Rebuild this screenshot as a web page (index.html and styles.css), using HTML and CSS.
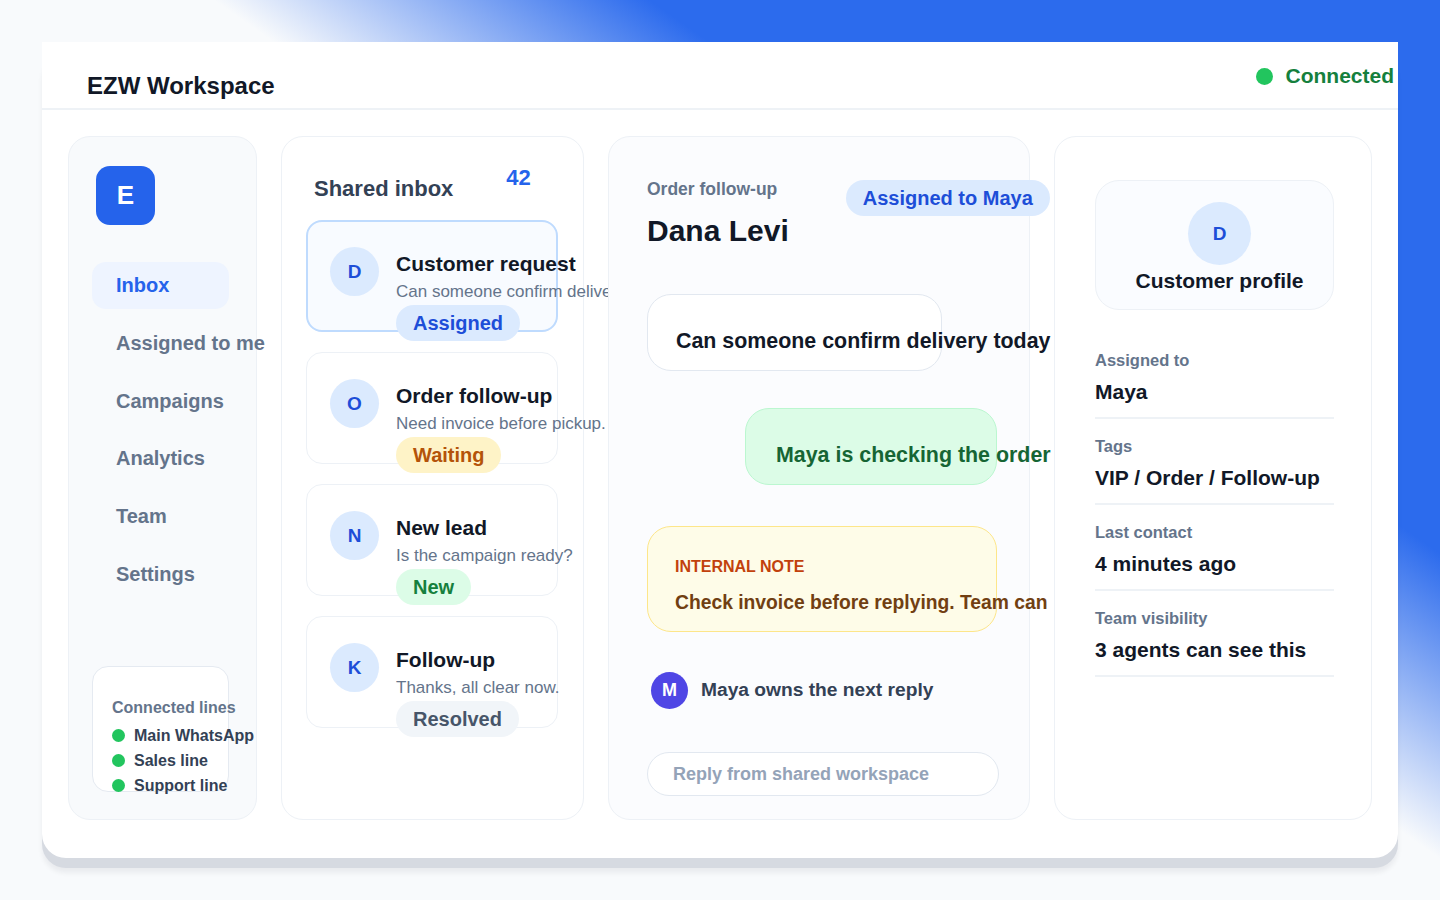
FILE: index.html
```html
<!DOCTYPE html>
<html lang="en">
<head>
  <meta charset="UTF-8" />
  <meta name="viewport" content="width=device-width, initial-scale=1.0"/>
  <title>EZW Workspace</title>
  <link rel="stylesheet" href="styles.css">
</head>
<body>
  <div class="app">
    <header class="topbar">
      <h1 class="brand">EZW Workspace</h1>
      <div class="status"><span class="dot"></span>Connected</div>
    </header>

    <main class="board">
      <aside class="panel sidebar">
        <div class="logo">E</div>
        <nav class="nav">
          <div class="nav-item active">Inbox</div>
          <div class="nav-item">Assigned to me</div>
          <div class="nav-item">Campaigns</div>
          <div class="nav-item">Analytics</div>
          <div class="nav-item">Team</div>
          <div class="nav-item">Settings</div>
        </nav>
        <div class="lines">
          <div class="lines-title">Connected lines</div>
          <div class="line"><span class="dot dot-sm"></span>Main WhatsApp</div>
          <div class="line"><span class="dot dot-sm"></span>Sales line</div>
          <div class="line"><span class="dot dot-sm"></span>Support line</div>
        </div>
      </aside>

      <section class="panel inbox">
        <div class="inbox-head">
          <h2>Shared inbox</h2>
          <span class="count">42</span>
        </div>
        <div class="conv-list">
          <div class="conv active">
            <div class="avatar">D</div>
            <div class="conv-body">
              <div class="conv-title">Customer request</div>
              <div class="conv-text">Can someone confirm delivery today?</div>
              <span class="tag tag-blue">Assigned</span>
            </div>
          </div>
          <div class="conv">
            <div class="avatar">O</div>
            <div class="conv-body">
              <div class="conv-title">Order follow-up</div>
              <div class="conv-text">Need invoice before pickup.</div>
              <span class="tag tag-yellow">Waiting</span>
            </div>
          </div>
          <div class="conv">
            <div class="avatar">N</div>
            <div class="conv-body">
              <div class="conv-title">New lead</div>
              <div class="conv-text">Is the campaign ready?</div>
              <span class="tag tag-green">New</span>
            </div>
          </div>
          <div class="conv">
            <div class="avatar">K</div>
            <div class="conv-body">
              <div class="conv-title">Follow-up</div>
              <div class="conv-text">Thanks, all clear now.</div>
              <span class="tag tag-gray">Resolved</span>
            </div>
          </div>
        </div>
      </section>

      <section class="panel chat">
        <div class="chat-head">
          <div>
            <div class="chat-label">Order follow-up</div>
            <h2 class="chat-name">Dana Levi</h2>
          </div>
          <span class="tag tag-blue head-tag">Assigned to Maya</span>
        </div>

        <div class="bubble bubble-in">Can someone confirm delivery today</div>
        <div class="bubble bubble-out">Maya is checking the order</div>

        <div class="note">
          <div class="note-label">INTERNAL NOTE</div>
          <div class="note-text">Check invoice before replying. Team can</div>
        </div>

        <div class="owner">
          <div class="owner-avatar">M</div>
          <span>Maya owns the next reply</span>
        </div>

        <div class="reply">Reply from shared workspace</div>
      </section>

      <section class="panel profile">
        <div class="profile-card">
          <div class="profile-avatar">D</div>
          <div class="profile-name">Customer profile</div>
        </div>
        <div class="fields">
          <div class="field">
            <div class="field-label">Assigned to</div>
            <div class="field-value">Maya</div>
          </div>
          <div class="field">
            <div class="field-label">Tags</div>
            <div class="field-value">VIP / Order / Follow-up</div>
          </div>
          <div class="field">
            <div class="field-label">Last contact</div>
            <div class="field-value">4 minutes ago</div>
          </div>
          <div class="field">
            <div class="field-label">Team visibility</div>
            <div class="field-value">3 agents can see this</div>
          </div>
        </div>
      </section>
    </main>
  </div>
</body>
</html>
```

FILE: styles.css
```css
:root {
  --blue: #2563eb;
  --blue-soft: #dbeafe;
  --blue-text: #1d4ed8;
  --ink: #111827;
  --slate: #334155;
  --muted: #64748b;
  --line: #edf1f6;
  --green: #22c55e;
}

html, body {
  margin: 0;
  height: 100%;
}

body {
  box-sizing: border-box;
  padding: 42px;
  font-family: "Liberation Sans", Arial, sans-serif;
  font-weight: 700;
  color: var(--ink);
  background: linear-gradient(35deg, #f8fafc 55%, #2c6bed 71%);
}

.app {
  height: 816px;
  background: #fff;
  border-radius: 24px;
  box-shadow: 0 10px 0 #d6dae1, 0 15px 5px rgba(15, 23, 42, 0.06);
  display: flex;
  flex-direction: column;
}

/* top bar */
.topbar {
  height: 66px;
  flex: none;
  background: #fff;
  border-bottom: 2px solid #eef2f6;
  display: flex;
  justify-content: space-between;
  padding: 0 4px 0 45px;
}

.brand {
  margin: 0;
  align-self: flex-end;
  padding-bottom: 8px;
  font-size: 24px;
  line-height: 28px;
  color: var(--ink);
}

.status {
  margin-top: 21px;
  height: 26px;
  display: flex;
  align-items: center;
  gap: 12px;
  font-size: 21px;
  line-height: 26px;
  color: #15803d;
}

.dot {
  width: 17px;
  height: 17px;
  border-radius: 50%;
  background: var(--green);
  flex: none;
}

.dot-sm {
  width: 13px;
  height: 13px;
}

/* board */
.board {
  flex: 1;
  display: grid;
  grid-template-columns: 189px 303px 422px 318px;
  gap: 24px;
  padding: 26px 26px 38px;
}

.panel {
  position: relative;
  box-sizing: border-box;
  border: 1px solid var(--line);
  border-radius: 22px;
}

/* sidebar */
.sidebar {
  background: #f8fafc;
  padding: 29px 23px 27px;
  display: flex;
  flex-direction: column;
}

.logo {
  width: 59px;
  height: 59px;
  margin-left: 4px;
  border-radius: 14px;
  background: var(--blue);
  color: #fff;
  font-size: 26px;
  display: flex;
  align-items: center;
  justify-content: center;
}

.nav {
  margin-top: 37px;
  display: flex;
  flex-direction: column;
  gap: 10.8px;
}

.nav-item {
  width: 137px;
  height: 47px;
  box-sizing: border-box;
  padding-left: 24px;
  display: flex;
  align-items: center;
  border-radius: 14px;
  font-size: 20px;
  color: var(--muted);
  white-space: nowrap;
}

.nav-item.active {
  background: #eef4ff;
  color: var(--blue);
}

.lines {
  margin-top: auto;
  width: 137px;
  height: 126px;
  box-sizing: border-box;
  padding: 31px 0 0 19px;
  background: #fff;
  border: 1px solid #e5eaf1;
  border-radius: 16px;
  white-space: nowrap;
}

.lines-title {
  font-size: 16px;
  line-height: 20px;
  color: var(--muted);
  margin-bottom: 5px;
}

.line {
  display: flex;
  align-items: center;
  gap: 9px;
  height: 25px;
  font-size: 16px;
  color: var(--slate);
}

/* inbox */
.inbox {
  background: #fff;
  padding: 28px 25px 0 24px;
}

.inbox-head {
  display: flex;
  align-items: flex-start;
  gap: 53px;
  padding-left: 8px;
  margin-bottom: 18px;
}

.inbox-head h2 {
  margin: 11px 0 0;
  font-size: 22px;
  line-height: 26px;
  color: var(--slate);
}

.count {
  font-size: 22px;
  line-height: 26px;
  color: var(--blue);
}

.conv-list {
  display: flex;
  flex-direction: column;
  gap: 20px;
}

.conv {
  height: 112px;
  box-sizing: border-box;
  border: 1px solid var(--line);
  border-radius: 16px;
  padding: 26px 0 0 23px;
  background: #fff;
  display: flex;
  align-items: flex-start;
  gap: 17px;
}

.conv.active {
  border: 2px solid #bfdbfe;
  padding: 25px 0 0 22px;
  background: #f8fbff;
}

.avatar {
  width: 49px;
  height: 49px;
  flex: none;
  border-radius: 50%;
  background: var(--blue-soft);
  color: var(--blue-text);
  font-size: 19px;
  display: flex;
  align-items: center;
  justify-content: center;
}

.conv-body {
  padding-top: 2px;
  white-space: nowrap;
}

.conv-title {
  font-size: 21px;
  line-height: 30px;
  color: var(--ink);
}

.conv-text {
  font-size: 17px;
  font-weight: 400;
  line-height: 26px;
  color: var(--muted);
}

.tag {
  display: inline-flex;
  align-items: center;
  height: 36px;
  padding: 0 17px;
  border-radius: 18px;
  font-size: 20px;
  line-height: 24px;
  white-space: nowrap;
}

.tag-blue { background: var(--blue-soft); color: var(--blue-text); }
.tag-yellow { background: #fef3c7; color: #b45309; }
.tag-green { background: #dcfce7; color: #15803d; }
.tag-gray { background: #f1f5f9; color: #475569; }

/* chat */
.chat {
  background: #fbfcfe;
  padding: 41px 38px 0;
  display: flex;
  flex-direction: column;
  align-items: flex-start;
}

.chat-head {
  display: flex;
  align-items: flex-start;
  gap: 57px;
}

.head-tag {
  flex: none;
  margin-top: 2px;
}

.chat-label {
  font-size: 17.5px;
  line-height: 22px;
  color: var(--muted);
  white-space: nowrap;
}

.chat-name {
  margin: 12px 0 0;
  font-size: 30px;
  line-height: 38px;
  color: var(--ink);
  white-space: nowrap;
}

.bubble {
  height: 77px;
  box-sizing: border-box;
  border-radius: 24px;
  padding: 33px 0 0 28px;
  font-size: 21.4px;
  line-height: 26px;
  white-space: nowrap;
}

.bubble-in {
  width: 295px;
  margin-top: 44px;
  background: #fff;
  border: 1px solid #e2e8f0;
  color: var(--ink);
}

.bubble-out {
  width: 252px;
  margin: 37px 0 0 98px;
  padding-left: 30px;
  background: #dcfce7;
  border: 1px solid #bbf7d0;
  color: #166534;
}

.note {
  width: 350px;
  height: 106px;
  box-sizing: border-box;
  margin-top: 41px;
  padding: 30px 0 0 27px;
  background: #fefce8;
  border: 1px solid #fde68a;
  border-radius: 24px;
  white-space: nowrap;
}

.note-label {
  font-size: 16px;
  line-height: 20px;
  color: #c2410c;
}

.note-text {
  margin-top: 13px;
  font-size: 19.3px;
  line-height: 26px;
  color: #713f12;
}

.owner {
  margin-top: 39px;
  height: 38px;
  padding-left: 4px;
  display: flex;
  align-items: center;
  gap: 13px;
  font-size: 19.2px;
  color: var(--slate);
  white-space: nowrap;
}

.owner-avatar {
  width: 37px;
  height: 37px;
  border-radius: 50%;
  background: #4f46e5;
  color: #fff;
  font-size: 18px;
  display: flex;
  align-items: center;
  justify-content: center;
}

.reply {
  margin-top: 43px;
  width: 352px;
  height: 44px;
  box-sizing: border-box;
  padding-left: 25px;
  display: flex;
  align-items: center;
  background: #fff;
  border: 1px solid #e2e8f0;
  border-radius: 22px;
  font-size: 18px;
  color: #94a3b8;
}

/* profile */
.profile {
  background: #fff;
  padding: 43px 37px 0 40px;
}

.profile-card {
  height: 130px;
  box-sizing: border-box;
  padding: 21px 0 0 10px;
  background: #fafcff;
  border: 1px solid var(--line);
  border-radius: 24px;
  display: flex;
  flex-direction: column;
  align-items: center;
}

.profile-avatar {
  width: 63px;
  height: 63px;
  border-radius: 50%;
  background: var(--blue-soft);
  color: var(--blue-text);
  font-size: 19px;
  display: flex;
  align-items: center;
  justify-content: center;
}

.profile-name {
  margin-top: 3px;
  font-size: 21px;
  line-height: 26px;
  color: var(--ink);
  white-space: nowrap;
}

.fields {
  margin-top: 23px;
}

.field {
  padding: 16px 0 12px;
  border-bottom: 2px solid #eef2f6;
  white-space: nowrap;
}

.field-label {
  font-size: 16.5px;
  line-height: 22px;
  color: var(--muted);
}

.field-value {
  margin-top: 8px;
  font-size: 21px;
  line-height: 26px;
  color: var(--ink);
}
```
